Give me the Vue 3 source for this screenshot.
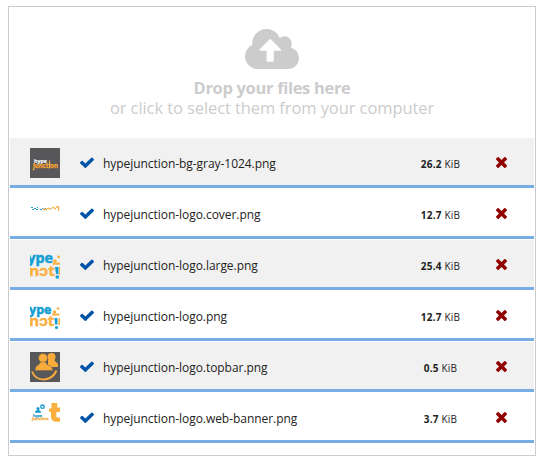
<script setup>
const files = [
  { name: 'hypejunction-bg-gray-1024.png', size: '26.2', thumb: 'gray' },
  { name: 'hypejunction-logo.cover.png', size: '12.7', thumb: 'cover' },
  { name: 'hypejunction-logo.large.png', size: '25.4', thumb: 'large' },
  { name: 'hypejunction-logo.png', size: '12.7', thumb: 'logo' },
  { name: 'hypejunction-logo.topbar.png', size: '0.5', thumb: 'topbar' },
  { name: 'hypejunction-logo.web-banner.png', size: '3.7', thumb: 'banner' },
]
</script>

<template>
  <div class="dropzone">
    <div class="prompt">
      <svg class="cloud" viewBox="0 -32 1920 1408" preserveAspectRatio="none">
        <path d="M1280 704q0-14-9-23l-352-352q-9-9-23-9t-23 9l-351 351q-10 12-10 24 0 14 9 23t23 9h224v352q0 13 9.5 22.5t22.5 9.5h192q13 0 22.5-9.5t9.5-22.5v-352h224q13 0 22.5-9.5t9.5-22.5zm640 288q0 159-112.5 271.5t-271.5 112.5h-1088q-185 0-316.5-131.5t-131.5-316.5q0-130 70-240t188-165q-2-30-2-43 0-212 150-362t362-150q156 0 285.5 87t188.5 231q71-62 166-62 106 0 181 75t75 181q0 76-41 138 130 31 213.5 135.5t83.5 238.5z" />
      </svg>
      <strong>Drop your files here</strong>
      <span>or click to select them from your computer</span>
    </div>
    <ul class="files">
      <li v-for="file in files" :key="file.name" class="file">
        <svg class="thumb" viewBox="0 0 30 30">
          <g v-if="file.thumb === 'gray'">
            <rect width="30" height="30" fill="#58585a" />
            <text x="4" y="14.5" class="logo" font-size="6" textLength="13" lengthAdjust="spacingAndGlyphs" fill="#fff" stroke="#fff" stroke-width=".15">hype</text>
            <text x="3" y="19.5" class="logo" font-size="6.5" textLength="25" lengthAdjust="spacingAndGlyphs" fill="#f9a72f" stroke="#f9a72f" stroke-width=".25">junction</text>
            <path d="M19.5 12.5v8" stroke="#f9b95c" stroke-width="1" />
          </g>
          <g v-else-if="file.thumb === 'cover'" transform="translate(0 1)">
            <path d="M1 7.5h2M2 9.5h2M4 8.5h2M6 9.5h2M7 7.5h1M10 9.5h2M12 8.5h1" stroke="#2b9fc9" />
            <path d="M13 9.5h4M17 8.5h3M20 9.5h1M22 7.5h2M24 8.5h2M26 7h2M28.5 6v5" stroke="#f6b04c" stroke-width="1.3" />
            <path d="M14 8.5h2M21 8.5h1" stroke="#9aa98a" />
          </g>
          <g v-else-if="file.thumb === 'large'">
            <text x="-2.5" y="12.5" class="logo" font-size="14" textLength="25.5" lengthAdjust="spacingAndGlyphs" fill="#139dd3" stroke="#139dd3" stroke-width=".5">ype</text>
            <text x="-1" y="25.5" class="logo" font-size="15" textLength="26" lengthAdjust="spacingAndGlyphs" fill="#fbaf3f" stroke="#fbaf3f" stroke-width=".4">nɔt</text>
            <g fill="#fbaf3f">
              <circle cx="25" cy="11" r="1.8" /><circle cx="28.5" cy="7" r="1.4" /><path d="M22.500 12.500h7.500v2.200h-7.500zM29 17h1v8h-1z" />
            </g>
            <path d="M25 17h3.5v7H26z" fill="#139dd3" /><circle cx="27.3" cy="27" r="1.8" fill="#139dd3" />
          </g>
          <g v-else-if="file.thumb === 'logo'">
            <text x="-1" y="13" class="logo" font-size="13" textLength="22.500" lengthAdjust="spacingAndGlyphs" fill="#139dd3" stroke="#139dd3" stroke-width=".5">ype</text>
            <text x="-1" y="25" class="logo" font-size="14" textLength="25.5" lengthAdjust="spacingAndGlyphs" fill="#fbaf3f" stroke="#fbaf3f" stroke-width=".4">nɔt</text>
            <g fill="#fbaf3f">
              <circle cx="24.5" cy="11" r="1.7" /><circle cx="28" cy="7.500" r="1.3" /><path d="M22 12.500h7.500v2h-7.500zM28.500 17h1.500v7h-1.500z" />
            </g>
            <path d="M24.500 17h3v6.500h-2.500z" fill="#139dd3" /><circle cx="26.500" cy="26.500" r="1.6" fill="#139dd3" />
          </g>
          <g v-else-if="file.thumb === 'topbar'">
            <rect width="30" height="30" fill="#58585a" />
            <g fill="#f9ab3c">
              <circle cx="21.5" cy="5" r="4" /><path d="M18 8h6l4 4v3H18z" />
              <circle cx="13" cy="6" r="4.5" stroke="#7c6546" stroke-width=".6" /><path d="M5 18.5q0-5 4-6l1.5-2.5h5l1.500 2.500q5 1 6 6z" stroke="#7c6546" stroke-width=".6" />
            </g>
            <path d="M2 19.500Q5.500 28 14.500 27.500Q23 26.500 26.500 18.500" fill="none" stroke="#f9ab3c" stroke-width="1.9" />
          </g>
          <g v-else>
            <g fill="#1599ce"><circle cx="8" cy="5.500" r="1.600" /><path d="M5 9.700q0-2.700 3-2.700t3 2.700z" /></g>
            <circle cx="12.5" cy="3.700" r="1.700" fill="none" stroke="#1599ce" stroke-width="1.4" />
            <text x="3" y="13.500" class="logo" font-size="4" textLength="9" lengthAdjust="spacingAndGlyphs" fill="#1599ce" stroke="#1599ce" stroke-width=".2">hype</text>
            <text x="2" y="17" class="logo" font-size="4" textLength="16.5" lengthAdjust="spacingAndGlyphs" fill="#f6b04c" stroke="#f6b04c" stroke-width=".3">junction</text>
            <path d="M21.500 0h6l-.5 4.500h3v4.500h-3.500l-.3 4.500q.3 1.500 3.800 1v4q-9 1.500-9-4.500V9h-2V6l2.500-1z" fill="#fbaf3f" />
          </g>
        </svg>
        <svg class="check" viewBox="121 270 1550 1252" preserveAspectRatio="none">
          <path d="M1671 566q0 40-28 68l-724 724-136 136q-28 28-68 28t-68-28l-136-136-362-362q-28-28-28-68t28-68l136-136q28-28 68-28t68 28l294 295 656-657q28-28 68-28t68 28l136 136q28 28 28 68z" />
        </svg>
        <span class="name">{{ file.name }}</span>
        <span class="size"><strong>{{ file.size }}</strong> KiB</span>
        <svg class="remove" viewBox="302 366 1188 1188" preserveAspectRatio="none">
          <path d="M1490 1322q0 40-28 68l-136 136q-28 28-68 28t-68-28l-294-294-294 294q-28 28-68 28t-68-28l-136-136q-28-28-28-68t28-68l294-294-294-294q-28-28-28-68t28-68l136-136q28-28 68-28t68 28l294 294 294-294q28-28 68-28t68 28l136 136q28 28 28 68t-28 68l-294 294 294 294q28 28 28 68z" />
        </svg>
      </li>
    </ul>
  </div>
</template>

<style>
body {
  background: #fff;
}
</style>

<style scoped>
.dropzone {
  box-sizing: border-box;
  width: 528px;
  height: 450px;
  margin: 6px 0 0 8px;
  padding: 1px;
  border: 1px solid #ccc;
  font-family: "Open Sans", sans-serif;
  display: flow-root;
}
.prompt {
  box-sizing: border-box;
  height: 130px;
  padding-top: 21px;
  display: flex;
  flex-direction: column;
  align-items: center;
  color: #ccc;
  font-size: 16.5px;
  line-height: 20px;
  letter-spacing: -0.09px;
  white-space: nowrap;
}
.prompt strong {
  letter-spacing: -0.32px;
}
.cloud {
  width: 54px;
  height: 40px;
  margin-bottom: 9px;
  fill: #ccc;
}
.files {
  list-style: none;
  margin: 0;
  padding: 0;
  display: flex;
  flex-direction: column;
  gap: 1px;
}
.file {
  box-sizing: border-box;
  height: 50px;
  padding: 0 27px 0 20px;
  border-bottom: 3px solid #78ade3;
  display: grid;
  grid-template-columns: 30px 34px 1fr 80px 11px;
  align-items: center;
  color: #222;
}
.file:nth-child(odd) {
  background: #f1f1f1;
}
.thumb {
  width: 30px;
  height: 30px;
  margin-top: 3px;
  overflow: hidden;
}
.logo {
  font-family: "Open Sans", sans-serif;
  font-weight: 700;
}
.check {
  width: 14px;
  height: 11px;
  margin: 2px 0 0 20px;
  fill: #0054a7;
}
.name {
  padding: 4px 0 0 9px;
  font-size: 12px;
  line-height: 18px;
  letter-spacing: -0.05px;
}
.size {
  padding: 4px 31px 0 0;
  font-size: 10px;
  line-height: 16px;
  letter-spacing: 0.2px;
  text-align: center;
  white-space: nowrap;
}
.remove {
  width: 11px;
  height: 11px;
  margin-top: 2px;
  fill: #900000;
}
</style>
